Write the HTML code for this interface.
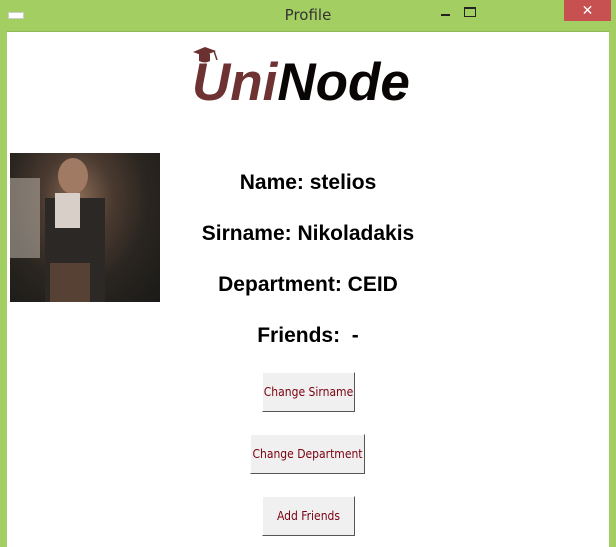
<!DOCTYPE html>
<html><head><style>
body{margin:0;width:616px;height:546px;overflow:hidden;background:#a3cf62;font-family:"Liberation Sans",sans-serif;position:relative}
.title{position:absolute;top:6px;left:0;width:616px;text-align:center;font-size:15px;color:#333;font-family:"DejaVu Sans","Liberation Sans",sans-serif}
.client{position:absolute;left:7px;top:31px;width:602px;height:515px;background:#fff;border-top:1px solid #8fb856}
.close{position:absolute;left:564px;top:0px;width:47px;height:21px;background:#c75050;color:#fff;text-align:center;font-size:14px;line-height:21px}
.t{position:absolute;left:0;width:616px;text-align:center;font-weight:bold;font-size:21px;color:#000}
.btn{position:absolute;background:#f0f0f0;border:1px solid;border-color:#fff #555 #555 #fff;font-size:12px;color:#7a0010;text-align:center;line-height:38px;font-family:"DejaVu Sans Condensed","Liberation Sans",sans-serif;box-sizing:border-box;height:40px;white-space:nowrap}
</style></head><body>
<div style="position:absolute;left:8px;top:12px;width:14px;height:5px;background:#fff;border:1px solid #ccc"></div>
<div class="title">Profile</div>
<div style="position:absolute;left:441px;top:14px;width:9px;height:2px;background:#222"></div>
<div style="position:absolute;left:464px;top:7px;width:10px;height:7px;border:1px solid #222;border-top-width:2px"></div>
<div class="close">✕</div>
<div class="client"></div>
<svg style="position:absolute;left:193px;top:46px" width="30" height="22"><polygon points="0,6 12,1 23,5 11,10" fill="#6b3030"/><path d="M6,8 v7 q6,3 11,0 v-7" fill="#6b3030"/><line x1="21" y1="5" x2="24" y2="14" stroke="#6b3030" stroke-width="1.5"/></svg>
<div style="position:absolute;left:192px;top:55px;font-size:53px;font-weight:bold;font-style:italic;letter-spacing:0px;font-family:'Liberation Sans',sans-serif;line-height:56px"><span style="color:#6e3232">Uni</span><span style="color:#0a0505">Node</span></div>
<div style="position:absolute;left:10px;top:153px;width:150px;height:149px;overflow:hidden;background:radial-gradient(ellipse at 45% 30%,#8a6a55 0,#4a3a30 30%,#2a2520 60%,#1a1a18 100%)">
<div style="position:absolute;left:48px;top:5px;width:30px;height:36px;border-radius:50%;background:#a07a62"></div>
<div style="position:absolute;left:35px;top:45px;width:60px;height:104px;background:#2c2825"></div>
<div style="position:absolute;left:45px;top:40px;width:25px;height:35px;background:#d8d0c8"></div>
<div style="position:absolute;left:0;top:25px;width:30px;height:80px;background:#b0a89e;opacity:.6"></div>
<div style="position:absolute;left:40px;top:110px;width:40px;height:39px;background:#6a4a3a;opacity:.7"></div>
</div>
<div class="t" style="top:171px">Name: stelios</div>
<div class="t" style="top:222px">Sirname: Nikoladakis</div>
<div class="t" style="top:273px">Department: CEID</div>
<div class="t" style="top:324px">Friends:&nbsp; -</div>
<div class="btn" style="left:262px;top:372px;width:93px">Change Sirname</div>
<div class="btn" style="left:250px;top:434px;width:115px">Change Department</div>
<div class="btn" style="left:262px;top:496px;width:93px">Add Friends</div>
</body></html>
